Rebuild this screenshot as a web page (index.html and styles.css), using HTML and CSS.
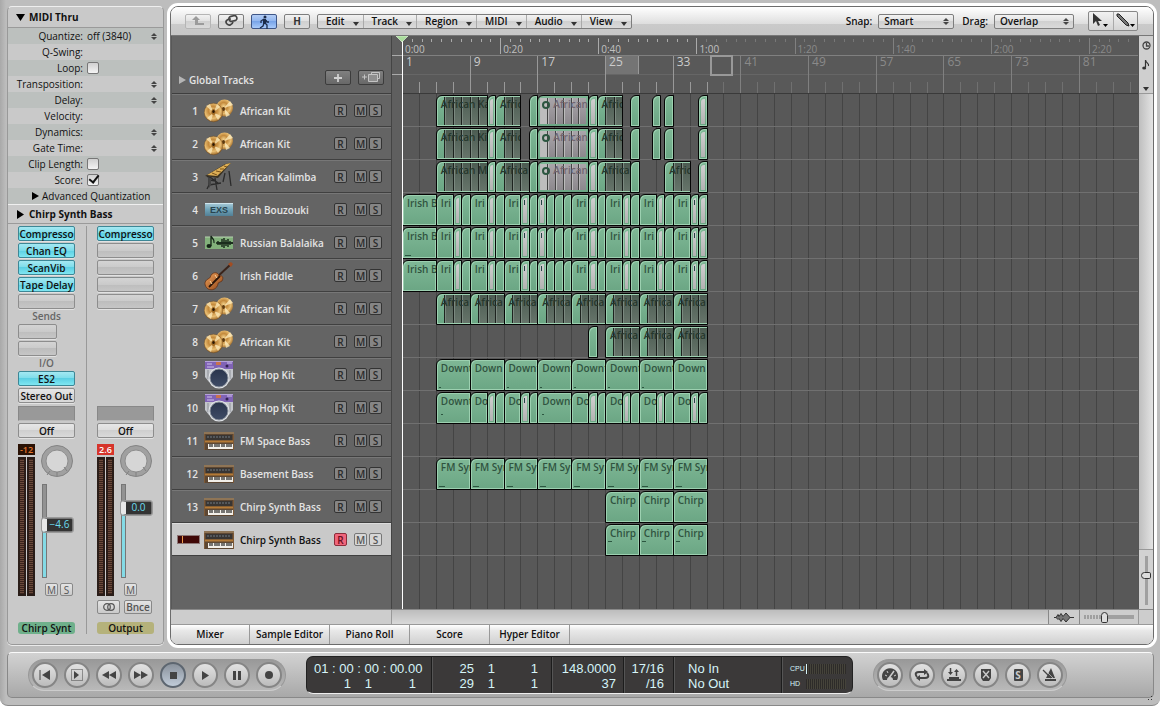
FILE: index.html
```html
<!DOCTYPE html>
<html lang="en">
<head>
<meta charset="utf-8">
<title>Arrange</title>
<link rel="stylesheet" href="styles.css">
</head>
<body>
<svg class="defs" aria-hidden="true">
  <defs>
    <radialGradient id="gold" cx=".45" cy=".4" r=".65"><stop offset="0" stop-color="#f3d28c"/><stop offset=".35" stop-color="#c48a3c"/><stop offset=".65" stop-color="#e8bd72"/><stop offset="1" stop-color="#935c1c"/></radialGradient>
    <linearGradient id="exsfill" x1="0" y1="0" x2="0" y2="1"><stop offset="0" stop-color="#a9cbd8"/><stop offset=".5" stop-color="#6fa3b8"/><stop offset="1" stop-color="#527f95"/></linearGradient>
    <linearGradient id="wood" x1="0" y1="0" x2="1" y2="1"><stop offset="0" stop-color="#f0a35c"/><stop offset="1" stop-color="#8e4417"/></linearGradient>
    <linearGradient id="cone" x1="0" y1="0" x2="0" y2="1"><stop offset="0" stop-color="#29344c"/><stop offset="1" stop-color="#3f4c66"/></linearGradient>
    <symbol id="i-cymbals" viewBox="0 0 30 30"><circle cx="20.500" cy="12" r="8.500" fill="url(#gold)"/><path d="M20 12 26 5l3 4zM20 12l6 7-4 2z" fill="#ffefc2" opacity=".75"/><ellipse cx="19.500" cy="13" rx="1.500" ry="2" fill="#5d3a10"/><circle cx="9.500" cy="16.500" r="9.300" fill="url(#gold)" stroke="#704411" stroke-width=".4"/><path d="M9.500 16.500 2 10l4-2zM9.500 16.500 13 8l3 3zM9.500 16.500 17 20l-3 4zM9.500 16.500 7 25l-4-3z" fill="#ffefc2" opacity=".7"/><ellipse cx="9.500" cy="16" rx="2.200" ry="3" fill="#a06a24"/><ellipse cx="9.500" cy="15.500" rx="1.200" ry="1.600" fill="#2b1804"/></symbol>
    <symbol id="i-kalimba" viewBox="0 0 30 30"><path d="m3 15 2-2v10l-2 4m8-11 2 12m12-19 2 15m-6-13-2 9M5 23l12-2m-12-3 7 1m-6-4 8 6" fill="none" stroke="#2b2b2b" stroke-width="1.300"/><path d="m4 16 3 0v7l-2 3z" fill="#454545"/><path d="m1 14 20-12 6-1-13 15z" fill="#3a3223"/><path d="m3 13 19-11 5-1-14 13z" fill="#dcae55"/><path d="m8 11 5 2m-1-4 5 1m-1-3 4 0m0-3 3 1" stroke="#7b531a" stroke-width="1"/></symbol>
    <symbol id="i-exs" viewBox="0 0 30 30"><path d="M1 8h28v13H1z" fill="url(#exsfill)"/><path d="M1 8.500h28" stroke="#cfe6ee" stroke-width="1"/><text x="15" y="18" text-anchor="middle" font-family="Liberation Sans, sans-serif" font-weight="bold" font-size="9" fill="#28444f">EXS</text></symbol>
    <symbol id="i-audio" viewBox="0 0 30 30"><path d="M1 9h28v12H1z" fill="#82b07b"/><path d="M1 9h28" stroke="#b6d2b0"/><ellipse cx="5" cy="18" rx="2.500" ry="2" fill="#132316"/><path d="M7 18V8c1 3 4 3 3 7" fill="none" stroke="#132316" stroke-width="1.300"/><path d="M12 15h17M14 13v4m2-3v3m2-6v8m2-9v10m2-8v6m2-7v8m2-6v4m2-3v2" stroke="#132316" stroke-width="1.400"/></symbol>
    <symbol id="i-fiddle" viewBox="0 0 30 30"><path d="M12 17 26 4" stroke="#3a241b" stroke-width="2"/><path d="m24 3 3-2 2 2-2 3z" fill="#a24d22"/><path d="M8 13c4-3 7 0 7 2 3-1 5 1 3 5-3 2-4 1-4 3-1 5-6 7-10 5-4-3-4-8 0-10 3-1 2-3 4-5z" fill="url(#wood)" stroke="#5d2b10" stroke-width=".7"/><path d="m5 26 11-11" stroke="#2a1509" stroke-width="1.800"/><path d="m6 20 2 3m3-9 2 3" stroke="#ffd7a0" stroke-width="1"/></symbol>
    <symbol id="i-boombox" viewBox="0 0 30 30"><path d="M1 8h28v9l-4 5H5l-4-5z" fill="#c3c6cb"/><path d="M4 10v9m22-9v9" stroke="#8d9097"/><path d="M1 1h28v8H1z" fill="#8063b5"/><path d="M1 1.500h28" stroke="#b4a2d8"/><path d="M3 4h5m15-1h5M3 7h7" stroke="#cfc3ea" stroke-width="1"/><path d="M12 2h5v3h-5z" fill="#c9724d"/><circle cx="23" cy="6" r="1.500" fill="#322252"/><circle cx="15" cy="18" r="10.500" fill="#e1e4e8"/><circle cx="15" cy="18" r="9" fill="url(#cone)" stroke="#8b929c"/></symbol>
    <symbol id="i-synth" viewBox="0 0 30 30"><path d="M0 6h30v18H0z" fill="#5d4733"/><path d="M0 6h30v2H0z" fill="#8f7556"/><path d="M2 9h26v5H2z" fill="#383533"/><path d="M3 11h24" stroke="#717b82" stroke-dasharray="2 1"/><path d="M1 14.500h28v2H1z" fill="#b47a36"/><path d="M4 18h25v5H4z" fill="#f2efe9"/><path d="M6 18v3m2-3v3m3-3v3m2-3v3m2-3v3m3-3v3m2-3v3m3-3v3m2-3v3m2-3v3" stroke="#222" stroke-width="1.200"/><path d="M.5 8v16m29-16v16" stroke="#7d5a38" stroke-width="1"/></symbol>
  </defs>
</svg>

<div class="app">
  <div class="workspace">
    <aside class="inspector">
      <button class="section-title"><svg width="9" height="9"><path d="M0 1h9L4.500 8z"/></svg>MIDI Thru</button>
      <div class="params">
        <div class="param"><span>Quantize:</span><button class="value">off (3840)</button><i class="updown"></i></div>
        <div class="param"><span>Q-Swing:</span></div>
        <div class="param"><label for="loop">Loop:</label><input type="checkbox" id="loop"></div>
        <div class="param"><span>Transposition:</span><b></b><i class="updown"></i></div>
        <div class="param"><span>Delay:</span><b></b><i class="updown"></i></div>
        <div class="param"><span>Velocity:</span></div>
        <div class="param"><span>Dynamics:</span><b></b><i class="updown"></i></div>
        <div class="param"><span>Gate Time:</span><b></b><i class="updown"></i></div>
        <div class="param"><label for="clip">Clip Length:</label><input type="checkbox" id="clip"></div>
        <div class="param"><label for="score">Score:</label><input type="checkbox" id="score" checked></div>
        <button class="advanced"><svg width="7" height="8"><path d="M0 0v8l7-4z"/></svg>Advanced Quantization</button>
      </div>
      <button class="section-title second"><svg width="9" height="9"><path d="M1 0v9l7-4.500z"/></svg>Chirp Synth Bass</button>
      <div class="strips">
        <section class="strip">
          <div class="slots">
            <button class="slot on">Compresso</button><button class="slot on">Chan EQ</button><button class="slot on">ScanVib</button><button class="slot on">Tape Delay</button><button class="slot" aria-label="Empty insert"></button>
          </div>
          <div class="caption">Sends</div>
          <div class="slots sends"><button class="slot" aria-label="Send 1"></button><button class="slot" aria-label="Send 2"></button></div>
          <div class="caption">I/O</div>
          <div class="slots"><button class="slot on">ES2</button><button class="slot out">Stereo Out</button></div>
          <div class="slots lower"><div class="group"></div><button class="slot out">Off</button></div>
          <div class="levels">
            <div class="metering"><output class="peak">-12</output><div class="meters"><i></i><i></i></div></div>
            <div class="control">
              <svg class="knob" viewBox="0 0 34 34"><circle cx="17" cy="17" r="15.500" fill="#a0a0a0" stroke="#848484"/><circle cx="17" cy="17" r="11" fill="#d6d6d6" stroke="#8d8d8d"/><path d="m10 27-3 4m20-4-3-4M17 28v4" stroke="#808080"/></svg>
              <div class="fader"><input type="range" aria-label="Volume" value="60" class="v60"><output class="cap at-low">−4.6</output></div>
              <div class="ms"><button>M</button><button>S</button></div>
            </div>
          </div>
          <div class="extras"></div>
          <div class="name green">Chirp Synt</div>
        </section>
        <section class="strip">
          <div class="slots">
            <button class="slot on">Compresso</button><button class="slot" aria-label="Empty insert"></button><button class="slot" aria-label="Empty insert"></button><button class="slot" aria-label="Empty insert"></button><button class="slot" aria-label="Empty insert"></button>
          </div>
          <div class="slots lower"><div class="group"></div><button class="slot out">Off</button></div>
          <div class="levels">
            <div class="metering"><output class="peak clip">2.6</output><div class="meters"><i></i><i></i></div></div>
            <div class="control">
              <svg class="knob" viewBox="0 0 34 34"><circle cx="17" cy="17" r="15.500" fill="#a0a0a0" stroke="#848484"/><circle cx="17" cy="17" r="11" fill="#d6d6d6" stroke="#8d8d8d"/><path d="m10 27-3 4m20-4-3-4M17 28v4" stroke="#808080"/></svg>
              <div class="fader"><input type="range" aria-label="Output volume" value="76" class="v76"><output class="cap at-high">0.0</output></div>
              <div class="ms"><button>M</button></div>
            </div>
          </div>
          <div class="extras"><button class="stereo" aria-label="Stereo"><svg width="14" height="8" fill="none" stroke="#555" stroke-width="1.200"><circle cx="5" cy="4" r="3.300"/><circle cx="9" cy="4" r="3.300"/></svg></button><button class="bounce">Bnce</button></div>
          <div class="name olive">Output</div>
        </section>
      </div>
    </aside>

    <main class="arrange">
      <div class="toolbar">
        <button class="tool dim" aria-label="Up"><svg width="12" height="10"><path d="M4 0 0 4h3v5h9V7H6V4h2z" fill="#9b9b9b"/></svg></button>
        <button class="tool" aria-label="Link"><svg width="13" height="12" fill="none" stroke="#444" stroke-width="1.700"><rect x="4" y="1" width="8" height="5" rx="2.500" transform="rotate(-12 8 4)"/><path d="M6 4C1 4 0 7 2 9c2 2 5 1 6-2"/></svg></button>
        <button class="tool active" aria-label="Catch"><svg width="12" height="14"><circle cx="7" cy="2" r="1.500" fill="#1b2b48"/><path d="M7 4v4l2 2v4M6 8l-1 3-3 2M6 4 3 6v2m5-3 1 2h2" fill="none" stroke="#1b2b48" stroke-width="1.300"/><path d="M5 4h3v5H5z" fill="#1b2b48"/></svg></button>
        <button class="tool">H</button>
        <nav class="menus"><button>Edit</button><button>Track</button><button>Region</button><button>MIDI</button><button>Audio</button><button>View</button></nav>
        <label class="first-label" for="snap">Snap:</label>
        <span class="pick snap"><select id="snap"><option>Smart</option></select><i class="updown"></i></span>
        <label for="drag">Drag:</label>
        <span class="pick drag"><select id="drag"><option>Overlap</option></select><i class="updown"></i></span>
        <div class="pointer-tools">
          <button aria-label="Pointer tool"><svg width="17" height="16"><path d="M1 0v11l3-3 2 5 2-1-2-4h4z" fill="#333"/><path d="M11 11h5l-2.500 3z"/></svg></button>
          <button aria-label="Pencil tool"><svg width="19" height="16"><path d="m1 1 2 0 9 9 1 3-3-1-9-9z" fill="#777" stroke="#222"/><path d="M14 11h5l-2.500 3z"/></svg></button>
        </div>
      </div>

      <div class="stage">
        <div class="headers">
          <div class="global">
            <button class="global-name"><svg width="7" height="8"><path d="M0 0v8l7-4z" fill="#b5b5b5"/></svg>Global Tracks</button>
            <button class="add" aria-label="New track"><svg width="10" height="10"><path d="M1 5h8M5 1v8" stroke="#d0d0d0" stroke-width="1.800"/></svg></button>
            <button class="add" aria-label="Duplicate track"><svg width="19" height="11" fill="none" stroke="#c4c4c4"><path d="M0 5h5M2.500 2.500v5"/><path d="M9.500 2.500v-2h8v6h-2"/><path d="M6.500 2.500h9v7h-9z" fill="#8f8f8f"/></svg></button>
          </div>
          <div class="track-list" id="tracks"></div>
        </div>
        <div class="gutter"><div class="brackets"></div></div>
        <div class="timeline">
          <div class="ruler">
            <div class="clock" id="clock"></div>
            <div class="bars" id="bars"></div>
            <div class="locator"></div>
          </div>
          <div class="lanes" id="lanes"><div class="grid-lines" id="grid"></div></div>
          <svg class="playhead" width="12" height="6"><path d="M0 0h12L6 6z" fill="#a9dc9c" stroke="#e9ffe4" stroke-width=".6"/></svg>
        </div>
        <div class="side">
          <div class="side-top">
            <svg width="9" height="9" fill="none" stroke="#444" stroke-width="1.300"><circle cx="4.500" cy="4.500" r="3.500"/><path d="M4.500 2v3H7"/></svg>
            <svg width="8" height="10"><path d="M3.500 0v7" stroke="#333" stroke-width="1.200"/><path d="M3.500 0c0 3 4 3 3 6" fill="none" stroke="#333" stroke-width="1.200"/><ellipse cx="2.200" cy="8" rx="2" ry="1.600" fill="#333"/></svg>
            <svg width="6" height="4"><path d="M0 0h6L3 4z" fill="#333"/></svg>
          </div>
          <div class="scroll-v"></div>
          <div class="zoom-v"><input type="range" aria-label="Vertical zoom" value="60"></div>
        </div>
      </div>

      <div class="foot">
        <div class="foot-left"></div><div class="scroll-h"></div>
        <button class="wave" aria-label="Waveform zoom"><svg width="20" height="11"><path d="M0 5.500h20" stroke="#333"/><path d="m2 5.500 2-3 1 2 2-3 2 3 3-3.500 4 4.500-4 4.500-3-3.500-2 3-2-3-1 1z" fill="#777" stroke="#333"/></svg></button>
        <div class="zoom-h"><input type="range" aria-label="Horizontal zoom" value="40"></div>
        <div class="corner"></div>
      </div>
      <nav class="tabs"><button>Mixer</button><button>Sample Editor</button><button>Piano Roll</button><button>Score</button><button>Hyper Editor</button></nav>
    </main>
  </div>

  <footer class="transport">
    <div class="pill">
      <button aria-label="Go to beginning"><svg viewBox="0 0 16 16"><path d="M3 3v10" stroke="#444"/><path d="M13 3v10L5 8z"/></svg></button>
      <button aria-label="Play from selection"><svg viewBox="0 0 16 16"><path d="M2.500 2.500h11v11h-11z" fill="none" stroke="#444" stroke-dasharray="1 1"/><path d="M5 4v8l5-4z"/></svg></button>
      <button aria-label="Rewind"><svg viewBox="0 0 16 16"><path d="M8 4v8L1 8zM15 4v8L8 8z"/></svg></button>
      <button aria-label="Forward"><svg viewBox="0 0 16 16"><path d="M1 4v8l7-4zM8 4v8l7-4z"/></svg></button>
      <button class="pressed" aria-label="Stop"><svg viewBox="0 0 16 16"><path d="M5 5h7v7H5z"/></svg></button>
      <button aria-label="Play"><svg viewBox="0 0 16 16"><path d="M5 4v9l7-4.500z"/></svg></button>
      <button aria-label="Pause"><svg viewBox="0 0 16 16"><path d="M4 4h3v9H4zM9 4h3v9H9z"/></svg></button>
      <button aria-label="Record"><svg viewBox="0 0 16 16"><circle cx="8" cy="8" r="4"/></svg></button>
    </div>
    <div class="lcd">
      <div class="cell time"><p>01 : 00 : 00 : 00.00</p><p><span>1</span><span>1</span><span>1</span></p></div>
      <div class="cell locators"><p><span>25</span><span>1</span><span>1</span></p><p><span>29</span><span>1</span><span>1</span></p></div>
      <div class="cell tempo"><p>148.0000</p><p>37</p></div>
      <div class="cell sign"><p>17/16</p><p>/16</p></div>
      <div class="cell midi"><p>No In</p><p>No Out</p></div>
      <div class="cell load"><p>CPU<i class="live"></i></p><p>HD<i></i></p></div>
    </div>
    <div class="pill right">
      <button aria-label="Tempo"><svg viewBox="0 0 16 16"><path d="M1 13a8 8 0 1 1 14 0h-4a3 3 0 0 0-6 0z"/><path d="m7 11 5-7" stroke="#ccc" stroke-width="1.500"/><path d="M3 8l2 1m0-5 1 2m8 2-2 1" stroke="#ccc"/></svg></button>
      <button aria-label="Cycle"><svg viewBox="0 0 16 16" class="line"><path d="M3 10c-3-4 0-5 2-5h6M13 6c3 4 0 5-2 5H5"/><path d="m10 2 4 3-4 3zM6 8l-4 3 4 3z" stroke="none" fill="#444"/></svg></button>
      <button aria-label="Autopunch"><svg viewBox="0 0 16 16"><path d="M4.500 1v5m6 3V4" stroke="#444" stroke-width="1.500"/><path d="m2 5 2.500 3L7 5zM8 5l2.500-3L13 5zM3 10h10v2H3zM1 12h14v2H1z"/></svg></button>
      <button aria-label="Replace"><svg viewBox="0 0 16 16"><path d="M3 2h10v9l-2 3H5l-2-3z"/><path d="m5 4 6 7m0-7-6 7" stroke="#ccc" stroke-width="1.400"/></svg></button>
      <button class="solo" aria-label="Solo"><span>S</span></button>
      <button aria-label="Metronome"><svg viewBox="0 0 16 16"><path d="m9 1 4 10H4zM3 12h11v2H3z"/><path d="m1 3 8 8" stroke="#444" stroke-width="1.300"/><path d="m6 6 5 5" stroke="#ccc" stroke-width=".7"/></svg></button>
    </div>
    <svg class="grip" width="6" height="6"><path d="M4 1h1v1H4zM1 4h1v1H1zM4 4h1v1H4z" fill="#333"/></svg>
  </footer>
</div>
<script src="app.js"></script>
</body>
</html>
```

FILE: styles.css
```css
*, *::before, *::after { box-sizing: border-box; }
body {
  margin: 0;
  background: #fff;
  font: 10px/16px "Open Sans", "Noto Sans", sans-serif;
  color: #111;
}
button, select, input, output { font: inherit; color: inherit; margin: 0; }
button { padding: 0; border: 0; background: none; cursor: default; }
p { margin: 0; }
.defs { position: absolute; width: 0; height: 0; }

.app {
  height: 100vh;
  min-height: 700px;
  display: flex;
  flex-direction: column;
  gap: 7px;
  padding: 6px 6px 7px 7px;
  background: linear-gradient(90deg, #a9a9a9, #bdbdbd 6px, #bdbdbd);
  border-bottom: 1px solid #888;
  border-radius: 0 0 8px 8px;
}
.workspace { flex: 1; display: flex; gap: 6px; min-height: 0; }

/* Inspector */
.inspector {
  width: 157px;
  flex: none;
  display: flex;
  flex-direction: column;
  border: 1px solid #999;
  border-top-color: #eee;
  border-radius: 5px;
  background: #c9c9c9;
  box-shadow: 0 1px 0 #eaeaea;
}
.section-title {
  display: flex;
  align-items: center;
  gap: 4px;
  height: 21px;
  padding-left: 8px;
  font-weight: bold;
  border-bottom: 1px solid #9a9a9a;
  flex: none;
}
.section-title.second { height: 20px; border-top: 1px solid #efefef; }
.params { flex: none; }
.param, .advanced { display: flex; align-items: center; height: 16px; width: 100%; }
.param:nth-child(odd), .advanced { background: #bcc0be; }
.param > :first-child { width: 79px; padding-right: 4px; text-align: right; flex: none; }
.value { flex: 1; text-align: left; }
.param b { flex: 1; }
.updown { width: 6px; height: 7px; flex: none; display: flex; flex-direction: column; justify-content: space-between; }
.updown::before, .updown::after { content: ""; border: solid transparent; border-width: 0 3px 3px; border-bottom-color: #444; width: 6px; }
.updown::after { border-width: 3px 3px 0; border-top-color: #444; }
.param .updown { margin-right: 6px; }
input[type=checkbox] {
  appearance: none;
  width: 12px;
  height: 12px;
  border: 1px solid #777;
  border-radius: 2px;
  background: linear-gradient(#d0d0d0, #f4f4f4);
}
input[type=checkbox]:checked { display: grid; overflow: visible; }
input[type=checkbox]:checked::after {
  content: "";
  width: 6px;
  height: 10px;
  margin: -2px 0 0 3px;
  border: solid #111;
  border-width: 0 2px 2px 0;
  transform: rotate(38deg);
}
.advanced { gap: 3px; padding-left: 24px; }
.strips { flex: 1; display: grid; grid-template-columns: 79px 1fr; padding: 2px 0 10px; min-height: 0; }
.strip { display: flex; flex-direction: column; padding: 0 11px 0 10px; }
.strip:first-child { border-right: 1px solid #999; }
.strip:last-child { padding-right: 9px; }
.slots { display: flex; flex-direction: column; gap: 2px; flex: none; }
.slot {
  height: 15px;
  border: 1px solid #8d8d8d;
  border-radius: 2px;
  background: linear-gradient(#d4d4d4, #cacaca 50%, #bdbdbd 50%, #c6c6c6);
  box-shadow: 0 1px 0 #e2e2e2;
  font-weight: 600;
  font-size: 10px;
  line-height: 12px;
  white-space: nowrap;
}
.slot.on { background: linear-gradient(#a5e8f2, #7bdcea 50%, #5ccfe3 50%, #7fe6f1); border-color: #3d8796; }
.slot.out { background: linear-gradient(#e6e6e6, #dcdcdc 50%, #cfcfcf 50%, #dadada); }
.sends { width: 39px; }
.caption { height: 15px; line-height: 15px; text-align: center; color: #666; flex: none; font-weight: 600; }
.group { height: 15px; background: #999; border: 1px solid #888; border-bottom-color: #bbb; }
.lower { margin-top: auto; }
.levels { display: grid; grid-template-columns: 17px 1fr; gap: 5px; height: 152px; margin-top: 6px; flex: none; }
.metering { display: flex; flex-direction: column; gap: 2px; }
.peak { height: 11px; line-height: 11px; background: #2a1205; color: #e2762c; text-align: center; font-weight: 600; font-size: 9px; white-space: nowrap; }
.peak.clip { background: #d6342b; color: #fff; }
.meters { flex: 1; display: grid; grid-template-columns: 1fr 1fr; gap: 1px; }
.meters i { border: 2px solid #2a1d18; background: repeating-linear-gradient(#3a241c 0 1px, #6a4a3b 1px 2px); }
.control { display: flex; flex-direction: column; }
.knob { width: 34px; height: 34px; flex: none; }
.fader { position: relative; height: 94px; margin-top: 6px; }
.fader input { appearance: none; display: block; writing-mode: vertical-lr; direction: rtl; width: 5px; height: 94px; margin-left: 2px; border: 1px solid #777; }
.fader input::-webkit-slider-thumb { appearance: none; width: 5px; height: 1px; }
.v60 { background: linear-gradient(#929292 50%, #84dbe6 50%); }
.v76 { background: linear-gradient(#929292 30%, #84dbe6 30%); }
.cap {
  position: absolute;
  left: 2px;
  width: 31px;
  height: 14px;
  border: 1px solid #777;
  border-left: 5px solid #e8e8e8;
  border-radius: 2px;
  background: #333;
  outline: 1px solid #999;
  color: #6bdcf0;
  text-align: center;
  line-height: 11px;
}
.at-low { top: 34px; }
.at-high { top: 17px; }
.ms { display: flex; gap: 2px; padding-left: 5px; margin-top: auto; }
.ms button, .extras button {
  width: 13px;
  height: 13px;
  border: 1px solid #888;
  border-radius: 2px;
  background: linear-gradient(#e4e4e4, #cacaca);
  color: #555;
  line-height: 10px;
  font-size: 10px;
}
.extras { height: 14px; margin-top: 4px; display: flex; gap: 4px; flex: none; }
.extras .stereo { width: 23px; height: 14px; display: grid; place-items: center; }
.extras .bounce { width: 28px; height: 14px; font-weight: 600; }
.name { height: 12px; line-height: 12px; margin-top: 8px; border-radius: 3px; text-align: center; font-weight: 600; white-space: nowrap; flex: none; }
.green { background: #6fb08b; }
.olive { background: #b5b27b; }

/* Arrange window */
.arrange {
  flex: 1;
  min-width: 0;
  display: flex;
  flex-direction: column;
  border: 1px solid #6c6c6c;
  border-radius: 8px;
  background: #fff;
  box-shadow: 0 0 0 3px #fff;
  overflow: hidden;
}
.toolbar {
  display: flex;
  align-items: center;
  height: 29px;
  flex: none;
  padding: 0 15px 0 14px;
  background: linear-gradient(#fff, #dedede 60%, #cacaca 62%, #c6c6c6);
  border-bottom: 1px solid #777;
}
.tool {
  width: 26px;
  height: 15px;
  margin-right: 7px;
  display: grid;
  place-items: center;
  border: 1px solid #7d7d7d;
  border-radius: 2px;
  background: linear-gradient(#f2f2f2, #e0e0e0 50%, #d0d0d0 50%, #dadada);
  font-weight: bold;
  line-height: 12px;
  color: #333;
  flex: none;
}
.tool.dim { border-color: #b5b5b5; }
.tool.active { background: linear-gradient(#b3cdf5, #8fb4ee 50%, #78a4e8 50%, #a9cbfb); border-color: #3e5687; }
.menus { display: flex; height: 15px; border: 1px solid #7d7d7d; border-radius: 2px; background: linear-gradient(#f2f2f2, #e0e0e0 50%, #d0d0d0 50%, #dadada); }
.menus button { position: relative; padding: 0 18px 0 8px; font-weight: 600; line-height: 13px; border-right: 1px solid #aaa; }
.menus button:last-child { border: 0; }
.menus button::after { content: ""; position: absolute; right: 4px; bottom: 2px; border: solid transparent; border-width: 4px 3px 0; border-top-color: #333; }
.toolbar label { font-weight: 600; margin: 0 6px 0 8px; }
.toolbar .first-label { margin-left: auto; }
.pick { position: relative; width: 76px; height: 15px; }
.pick.drag { width: 80px; }
.pick select { appearance: none; display: block; width: 100%; height: 15px; padding: 0 5px; border: 1px solid #7d7d7d; border-radius: 2px; background: linear-gradient(#f2f2f2, #e0e0e0 50%, #d0d0d0 50%, #dadada); font-weight: 600; line-height: 12px; }
.pick .updown { position: absolute; right: 5px; top: 4px; }
.pointer-tools { display: flex; width: 50px; height: 20px; margin-left: 14px; border: 1px solid #888; border-radius: 2px; background: linear-gradient(#f2f2f2, #d4d4d4); }
.pointer-tools button { flex: 1; display: grid; place-items: center; }
.pointer-tools button + button { border-left: 1px solid #aaa; }

.stage { flex: 1; display: flex; min-height: 0; background: #585858; padding-left: 1px; }
.headers { width: 220px; flex: none; background: #646464; border-right: 1px solid #444; }
.global { height: 58px; display: flex; align-items: flex-end; gap: 7px; padding: 0 7px 8px; border-bottom: 1px solid #3e3e3e; }
.global-name { display: flex; align-items: center; gap: 3px; height: 10px; margin-right: auto; font-weight: 600; color: #e4e4e4; line-height: 10px; }
.add { width: 26px; height: 15px; display: grid; place-items: center; border: 1px solid #3c3c3c; border-radius: 2px; background: linear-gradient(#808080, #686868); }
.track {
  display: grid;
  grid-template-columns: 26px 30px 1fr 13px 13px 13px;
  align-items: center;
  height: 33px;
  padding-right: 9px;
  border-top: 1px solid #777;
  border-bottom: 1px solid #404040;
  font-weight: 600;
  color: #e4e4e4;
}
.track .num { text-align: right; }
.track svg { width: 30px; height: 30px; margin-left: 6px; }
.track .label { padding-left: 12px; white-space: nowrap; }
.track button { width: 13px; height: 13px; border: 1px solid #333; border-radius: 2px; background: #858585; color: #2b2b2b; line-height: 10px; font-size: 10px; }
.track button:nth-of-type(1) { margin-left: -9px; }
.track button:nth-of-type(2) { margin-left: -2px; }
.track.selected { background: #c9c9c9; color: #111; border-top-color: #ddd; }
.track.selected button { background: #d6d6d6; border-color: #777; color: #555; }
.track.selected button:first-of-type { background: #f0657b; border-color: #8b2d3a; color: #6d0d1e; }
.track .vu { display: block; width: 23px; height: 9px; margin-left: 5px; border: 1px solid #8c7777; background: linear-gradient(90deg, #400807 4px, #ef9c4c 4px 5px, #400807 5px); }

.gutter { width: 10px; flex: none; background: #5f5f5f; }
.brackets { height: 20px; margin-top: 19px; border: solid #aaa; border-width: 1px 0; }
.timeline { position: relative; flex: 1; min-width: 0; display: flex; flex-direction: column; }
.timeline::before { content: ""; position: absolute; left: 0; top: 4px; bottom: 0; width: 1px; background: #fff; z-index: 3; }
.playhead { position: absolute; left: -6px; top: 0; z-index: 4; }
.ruler { position: relative; height: 58px; flex: none; border-bottom: 1px solid #3a3a3a; background: #595959; }
.clock { height: 20px; display: grid; grid-template-columns: repeat(75, minmax(0, 1fr)); border-bottom: 1px solid #808080; }
.clock span { border-left: 1px solid #777; height: 3px; margin-top: 3px; white-space: nowrap; line-height: 12px; color: #8a8a8a; }
.clock .major { height: 16px; margin-top: 2px; padding: 5px 0 0 2px; border-color: #808080; }
.clock .lit { color: #c0c0c0; border-color: #aaa; }
.bars { height: 37px; display: grid; grid-template-columns: repeat(87, minmax(0, 1fr)); align-items: end; background: linear-gradient(transparent 18px, #666 18px 19px, transparent 19px); }
.bars span { grid-row: 1; height: 11px; border-left: 1px solid #707070; font-size: 12px; line-height: 12px; color: #8a8a8a; white-space: nowrap; }
.bars .major { height: 37px; padding-left: 3px; border-color: #808080; }
.bars .lit { border-color: #999; color: #ccc; }
.bars .cycle { align-self: start; height: 18px; background: #747474; border: solid #999; border-width: 0 1px; }
.locator { position: absolute; left: calc(100% * 36.4 / 87); top: 19px; width: 23px; height: 21px; border: 2px solid #999; }
.lanes { position: relative; flex: 1; background: #585858; }
.grid-lines { position: absolute; inset: 0; display: grid; grid-template-columns: repeat(87, minmax(0, 1fr)); }
.grid-lines i { grid-column: span 2; border-left: 1px solid #444; }
.lane { position: relative; display: grid; grid-template-columns: repeat(174, minmax(0, 1fr)); height: 33px; padding-top: 1px; border-bottom: 1px solid #707070; }
.region {
  grid-row: 1;
  height: 32px;
  margin-right: -1px;
  padding: 2px 0 0 4px;
  overflow: hidden;
  border: 1px solid #050505;
  border-radius: 6px 0 0 0;
  background: linear-gradient(#7fb896, #6ba684);
  box-shadow: inset 1px 1px 0 #9cd0b0, inset -1px -1px 0 #9cd0b0;
  line-height: 12px;
  color: #30533f;
  font-weight: 600;
  white-space: nowrap;
  position: relative;
}
.region b { position: relative; font-weight: 600; }
.stripes { position: absolute; inset: 1px 0 1px 0; display: flex; }
.stripes i { flex: 1; border-left: 1px solid #1d231f; box-shadow: inset 1px 0 0 #7b8980; background: linear-gradient(#4c5c52, #66746a); }
.d .stripes i:first-child { background: none; border: 0; box-shadow: none; }
.region.d { color: #26372c; }
.region.p::before, .region.m::before { content: ""; position: absolute; inset: 3px 2px 2px 2px; background: linear-gradient(#cfcfcf, #b2b2b2); border-radius: 3px 0 0 0; }
.region.m::after { content: ""; position: absolute; left: 3px; top: 5px; width: 1px; height: 5px; background: #244; }
.region.o { color: #6f6570; box-shadow: none; }
.o .stripes { inset: 2px; }
.o .stripes i { border-color: #444; box-shadow: inset 1px 0 0 #bbb; background: linear-gradient(#a9a5aa, #8c888d); }
.o .stripes i:first-child { border: 0; background: #bdbdbd; }
.o b::before { content: ""; display: inline-block; width: 8px; height: 8px; margin-right: 3px; border: 2px solid #2c5640; border-radius: 50%; vertical-align: -1px; }
.region.low::after { content: ""; position: absolute; left: 2px; top: 27px; width: 6px; height: 1px; background: #2c5640; }
.region.dot::after { content: ""; position: absolute; left: 2px; top: 27px; width: 2px; height: 1px; background: #2c5640; }
.region.mid::after { content: ""; position: absolute; left: 2px; top: 16px; width: 4px; height: 1px; background: #2c5640; }
.region.high::after { content: ""; position: absolute; left: 4px; top: 21px; width: 2px; height: 1px; background: #2c5640; }

.side { width: 15px; flex: none; display: flex; flex-direction: column; border-left: 1px solid #555; }
.side-top { height: 58px; display: flex; flex-direction: column; align-items: center; gap: 10px; padding-top: 5px; background: #cfcfcf; border-bottom: 1px solid #999; }
.side-top svg:last-child { margin-top: 7px; }
.scroll-v { flex: 1; background: linear-gradient(90deg, #bebebe, #e4e4e4); }
.zoom-v { height: 60px; background: #d2d2d2; border-top: 1px solid #999; padding: 5px 0; display: flex; justify-content: center; }
.zoom-v input { writing-mode: vertical-lr; direction: rtl; width: 11px; height: 50px; appearance: none; background: linear-gradient(#d2d2d2 1px, transparent 1px 3px) 0 0 / 100% 4px no-repeat, linear-gradient(90deg, transparent 4px, #a0a0a0 4px 7px, transparent 7px); }
.zoom-v input::-webkit-slider-thumb { appearance: none; width: 10px; height: 7px; border: 1px solid #333; border-radius: 4px 2px 2px 4px; background: #ddd; }
.foot { height: 15px; display: flex; flex: none; border-top: 1px solid #888; background: #cdcdcd; }
.foot-left { width: 221px; flex: none; border-right: 1px solid #999; }
.scroll-h { flex: 1; background: linear-gradient(#bdbdbd, #d9d9d9); }
.wave { width: 32px; display: grid; place-items: center; border: solid #888; border-width: 0 1px; }
.zoom-h { width: 59px; display: flex; align-items: center; justify-content: center; border-right: 1px solid #999; }
.zoom-h input { appearance: none; width: 50px; height: 12px; background: repeating-linear-gradient(90deg, transparent 0 2px, #cdcdcd 2px 3px) 0 0 / 18px 100% no-repeat, linear-gradient(transparent 4px, #a0a0a0 4px 8px, transparent 8px); }
.zoom-h input::-webkit-slider-thumb { appearance: none; width: 7px; height: 11px; border: 1px solid #333; border-radius: 4px 4px 2px 2px; background: #ddd; }
.corner { width: 14px; }
.tabs { height: 20px; flex: none; display: flex; background: linear-gradient(#fff, #e8e8e8 30%, #d0d0d0); border-top: 1px solid #999; }
.tabs button { width: 80px; font-weight: 600; line-height: 17px; border-right: 1px solid #999; }
.tabs button:first-child { width: 79px; }

/* Transport */
.transport {
  position: relative;
  height: 46px;
  flex: none;
  display: flex;
  align-items: center;
  padding-left: 20px;
  border: 1px solid #888;
  border-top-color: #fafafa;
  border-radius: 5px;
  background: linear-gradient(#d2d2d2, #a8a8a8);
}
.pill { display: flex; gap: 6px; padding: 2px 3px; border-radius: 16px; background: linear-gradient(#999, #b9b9b9); border: 1px solid #999; border-bottom-color: #ccc; }
.pill button { width: 26px; height: 26px; border: 2px solid #858585; border-radius: 50%; background: linear-gradient(#e2e2e2, #bcbcbc); display: grid; place-items: center; }
.pill svg { width: 16px; height: 16px; fill: #444; }
.pill .line { fill: none; stroke: #444; stroke-width: 2; }
.pill .pressed { background: linear-gradient(#8a929c, #c0cbd8); border-color: #5d6670; }
.solo span { width: 9px; height: 12px; background: #444; color: #ccc; font-weight: bold; line-height: 12px; border-radius: 1px; }
.lcd { display: flex; width: 547px; height: 38px; margin: 0 20px; padding-top: 4px; border: 1px solid #222; border-bottom-color: #eee; border-radius: 7px; background: #3b3939; color: #d5f4f8; font: 13px/15px "Liberation Sans", Arial, sans-serif; }
.cell { border-right: 1px solid #1c1c1c; box-shadow: 1px 0 0 #555; margin: -4px 0 0; padding-top: 4px; white-space: nowrap; }
.cell span { display: inline-block; text-align: right; }
.time { width: 125px; padding-left: 7px; }
.time span:nth-child(1) { width: 37px; }
.time span:nth-child(2) { width: 21px; }
.time span:nth-child(3) { width: 44px; }
.locators { width: 120px; }
.locators span:nth-child(1) { width: 42px; }
.locators span:nth-child(2) { width: 21px; }
.locators span:nth-child(3) { width: 43px; }
.tempo { width: 72px; padding-right: 7px; text-align: right; }
.sign { width: 50px; padding-right: 9px; text-align: right; }
.midi { width: 108px; padding-left: 14px; }
.load { flex: 1; border: 0; box-shadow: none; font-size: 7px; padding-left: 8px; }
.load p { display: flex; align-items: center; justify-content: space-between; padding-right: 6px; height: 15px; }
.load i { width: 40px; height: 10px; background: repeating-linear-gradient(90deg, #2d2b29 0 1px, #45433a 1px 2px); }
.load .live { border-left: 1px solid #d5f4f8; }
.grip { position: absolute; right: 0; bottom: -4px; }
```

FILE: app.js
```js
const KIT = ["African Kit", "cymbals"];
const BEAT = "p10-11 g15-16 g27-28 p22-23";
const FILLS = "p6-7 g7-8 p10-11 g11-12 m14-15 g15-16 m16-17 g17-18 g18-19 g19-20 p22-23 g23-24 p26-27 g27-28 p30-31 g31-32 m34-35 p35-36";
const IRISH = " g4-6:Iri g8-10:Iri g12-14:Iri g20-22:Iri g24-26:Iri g28-30:Iri g32-34:Iri ";
const every4 = (kind, text, from) => {
  const out = [];
  for (let b = from; b < 36; b += 4) out.push(`${kind}${b}-${b + 4}:${text}`);
  return out.join(" ");
};

// Each region is written kind + start bar - end bar : label
const tracks = [
  [...KIT, `d4-10:African_Ka d11-14:Afric o16-22:African d23-26:Afric g29.5-30.5 g31-32 p35-36 ${BEAT}`],
  [...KIT, `d4-10:African_Kit d11-14:Afric o16-22:African d23-26:Afric g29.5-30.5 g31-32 p35-36 ${BEAT}`],
  ["African Kalimba", "kalimba", `d4-10:African_M d11-15:Africa o16-22:African d23-27:Africa d31-34:Afric p35-36 ${BEAT}`],
  ["Irish Bouzouki", "exs", "g0-4:Irish_B" + IRISH + FILLS],
  ["Russian Balalaika", "audio", "g.low0-4:Irish_B" + IRISH + FILLS],
  ["Irish Fiddle", "fiddle", "g0-4:Irish_B" + IRISH + FILLS],
  [...KIT, every4("d", "Africa", 4)],
  [...KIT, "g22-23 " + every4("d", "Africa", 24)],
  ["Hip Hop Kit", "boombox", "g.dot4-8:Downt g8-12:Down g.dot12-16:Downt g.dot16-20:Downt g.dot20-24:Downt g.dot24-28:Downt g.dot28-32:Downt g32-36:Down"],
  ["Hip Hop Kit", "boombox", "g.high4-8:Downt g8-10:Do p10-11 g11-12 g12-14:Do m14-15 g15-16 g.high16-20:Downt g20-22:Do p22-23 g23-24 g24-26:Do p26-27 g27-28 g28-30:Do p30-31 g31-32 g32-34:Do m34-35 g35-36"],
  ["FM Space Bass", "synth", ""],
  ["Basement Bass", "synth", every4("g.low", "FM_Syn", 4)],
  ["Chirp Synth Bass", "synth", every4("g", "Chirp", 24)],
  ["Chirp Synth Bass", "synth", every4("g.mid", "Chirp", 24)]
];

const list = document.getElementById("tracks");
const lanes = document.getElementById("lanes");
tracks.forEach(([name, icon, regions], i) => {
  const last = i === tracks.length - 1;
  const row = document.createElement("div");
  row.className = "track" + (last ? " selected" : "");
  row.innerHTML = `${last ? '<i class="vu"></i>' : `<span class="num">${i + 1}</span>`}
    <svg><use href="#i-${icon}"/></svg><span class="label">${name}</span>
    <button>R</button><button>M</button><button>S</button>`;
  list.append(row);

  const lane = document.createElement("div");
  lane.className = "lane";
  regions.split(" ").filter(Boolean).forEach(code => {
    const [, kind, mark, from, to, text] = code.match(/^([a-z])(?:\.([a-z]+))?([\d.]+)-([\d.]+)(?::(.*))?$/);
    const region = document.createElement("div");
    region.className = `region ${kind} ${mark || ""}`;
    region.style.gridColumn = `${from * 2 + 1} / ${to * 2 + 1}`;
    if (kind === "d" || kind === "o") {
      region.innerHTML = `<div class="stripes">${"<i></i>".repeat(to - from)}</div>`;
    }
    if (text) {
      const label = document.createElement("b");
      label.textContent = text.replace(/_/g, " ");
      region.append(label);
    }
    lane.append(region);
  });
  lanes.append(lane);
});

document.getElementById("grid").innerHTML = "<i></i>".repeat(43);

const clock = document.getElementById("clock");
for (let i = 0; i < 75; i++) {
  const tick = document.createElement("span");
  if (i % 10 === 0) {
    const s = i * 2;
    tick.className = "major";
    tick.textContent = `${Math.floor(s / 60)}:${String(s % 60).padStart(2, "0")}`;
  }
  if (i <= 30) tick.classList.add("lit");
  clock.append(tick);
}

const bars = document.getElementById("bars");
const cycle = document.createElement("span");
cycle.className = "cycle";
cycle.style.gridColumn = "25 / 29";
bars.append(cycle);
for (let b = 1; b <= 87; b += 2) {
  const tick = document.createElement("span");
  tick.style.gridColumn = `${b} / ${b + 1}`;
  if (b % 8 === 1) {
    tick.className = "major";
    tick.textContent = b;
  }
  if (b <= 37) tick.classList.add("lit");
  bars.append(tick);
}
```
